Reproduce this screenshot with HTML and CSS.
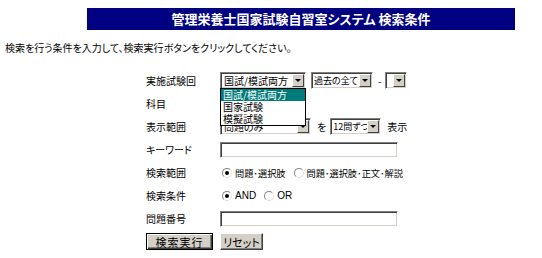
FILE: index.html
```html
<!DOCTYPE html>
<html lang="ja">
<head>
<meta charset="utf-8">
<title>検索条件</title>
<link rel="stylesheet" href="styles.css">
</head>
<body>
<div class="header">管理栄養士国家試験自習室システム 検索条件</div>
<p class="intro">検索を行う条件を入力して、検索実行ボタンをクリックしてください。</p>
<div class="form">
  <div class="label">実施試験回</div>
  <div class="ctrl">
    <div class="dropwrap">
      <span class="sel w85"><span class="val">国試/模試両方</span><span class="btn"></span></span>
      <ul class="list">
        <li class="on">国試/模試両方</li>
        <li>国家試験</li>
        <li>模擬試験</li>
      </ul>
    </div>
    <span class="sel w62"><span class="val">過去の全て</span><span class="btn"></span></span>
    <span class="dash">-</span>
    <span class="sel w22"><span class="val"></span><span class="btn"></span></span>
  </div>
  <div class="label">科目</div>
  <div class="ctrl"></div>
  <div class="label">表示範囲</div>
  <div class="ctrl">
    <span class="sel w90"><span class="val hidden">問題のみ</span><span class="btn"></span></span>
    <span class="txt">を</span>
    <span class="sel w51"><span class="val">12問ずつ</span><span class="btn"></span></span>
    <span class="txt">表示</span>
  </div>
  <div class="label">キーワード</div>
  <div class="ctrl"><span class="input"></span></div>
  <div class="label">検索範囲</div>
  <div class="ctrl">
    <span class="radio checked"></span><span class="rtxt">問題･選択肢</span>
    <span class="radio"></span><span class="rtxt">問題･選択肢･正文･解説</span>
  </div>
  <div class="label">検索条件</div>
  <div class="ctrl">
    <span class="radio checked"></span><span class="rtxt lat">AND</span>
    <span class="radio"></span><span class="rtxt lat">OR</span>
  </div>
  <div class="label">問題番号</div>
  <div class="ctrl"><span class="input"></span></div>
</div>
<div class="buttons">
  <span class="button b1">検索実行</span>
  <span class="button b2">リセット</span>
</div>
</body>
</html>
```
FILE: styles.css
```css
* { box-sizing: border-box; }
html, body { background: #fff; }
body {
  margin: 0;
  padding: 8px 0 0 0;
  font-family: "Noto Sans CJK JP", "DejaVu Sans", sans-serif;
  font-feature-settings: "palt";
  font-size: 10px;
  color: #000;
}
.header {
  margin-left: 87px;
  width: 428px;
  height: 22px;
  background: #000080;
  color: #fff;
  font-size: 13px;
  font-weight: bold;
  line-height: 22px;
  text-align: center;
}
.intro {
  margin: 11px 0 0 5px;
  line-height: 14px;
  font-size: 10px;
}
.form {
  margin: 14px 0 0 146px;
  display: grid;
  grid-template-columns: 74px 260px;
  grid-auto-rows: 23px;
  align-items: center;
}
.label { line-height: 14px; }
.ctrl {
  display: flex;
  align-items: center;
  height: 23px;
}
.dropwrap { position: relative; display: flex; }
.sel {
  display: inline-flex;
  height: 17px;
  border-top: 1px solid #808080;
  border-left: 1px solid #808080;
  border-right: 1px solid #fff;
  border-bottom: 1px solid #fff;
  box-shadow: inset 1px 1px 0 #404040, inset -1px -1px 0 #d4d0c8;
  background: #fff;
  padding: 1px;
}
.val {
  flex: 1;
  min-width: 0;
  padding-left: 2px;
  font-size: 10px;
  line-height: 13px;
  white-space: nowrap;
}
.val.hidden { overflow: hidden; }
.btn {
  flex: none;
  width: 12px;
  height: 13px;
  background: #d4d0c8;
  border-top: 1px solid #fff;
  border-left: 1px solid #fff;
  border-right: 1px solid #404040;
  border-bottom: 1px solid #404040;
  position: relative;
}
.btn::after {
  content: "";
  position: absolute;
  left: 2px;
  top: 4px;
  border-left: 3px solid transparent;
  border-right: 3px solid transparent;
  border-top: 3px solid #000;
}
.w85 { width: 86px; }
.w62 { width: 62px; margin-left: 5px; }
.w22 { width: 22px; }
.w90 { width: 91px; }
.w51 { width: 51px; }
.w51 .val, .w62 .val { padding-left: 1px; font-size: 9px; }
.dash { margin: 0 4px 0 5px; }
.txt { margin: 0 4px 0 6px; }
.list {
  position: absolute;
  left: 0;
  top: 16px;
  width: 86px;
  margin: 0;
  padding: 0;
  list-style: none;
  background: #fff;
  border: 1px solid #000;
  z-index: 2;
}
.list li {
  height: 12px;
  line-height: 12px;
  font-size: 10px;
  padding-left: 2px;
  white-space: nowrap;
}
.list li.on { background: #007b7b; color: #fff; }
.input {
  display: block;
  width: 178px;
  height: 16px;
  border-top: 1px solid #808080;
  border-left: 1px solid #808080;
  border-right: 1px solid #fff;
  border-bottom: 1px solid #fff;
  box-shadow: inset 1px 1px 0 #404040, inset -1px -1px 0 #d4d0c8;
  background: #fff;
}
.radio {
  flex: none;
  width: 10px;
  height: 10px;
  border-radius: 50%;
  border: 1px solid #808080;
  border-right-color: #e0e0e0;
  border-bottom-color: #e0e0e0;
  background: #fff;
  position: relative;
  margin: 0 3px 0 2px;
}
.radio.checked::after {
  content: "";
  position: absolute;
  left: 2px;
  top: 2px;
  width: 4px;
  height: 4px;
  border-radius: 50%;
  background: #000;
}
.rtxt { margin-right: 6px; font-size: 9.2px; }
.lat { font-family: "Liberation Sans", Arial, sans-serif; font-size: 10px; }
.buttons {
  margin: 3px 0 0 146px;
  display: flex;
  gap: 7px;
}
.button {
  display: inline-flex;
  align-items: center;
  justify-content: center;
  height: 17px;
  background: #d4d0c8;
  border-top: 1px solid #fff;
  border-left: 1px solid #fff;
  border-right: 1px solid #404040;
  border-bottom: 1px solid #404040;
  box-shadow: inset -1px -1px 0 #808080;
  font-size: 11px;
}
.b1 { width: 67px; border: 1px solid #000; box-shadow: inset 1px 1px 0 #fff, inset -1px -1px 0 #404040, inset -2px -2px 0 #808080; letter-spacing: 1px; }
.b2 { width: 43px; }
```
